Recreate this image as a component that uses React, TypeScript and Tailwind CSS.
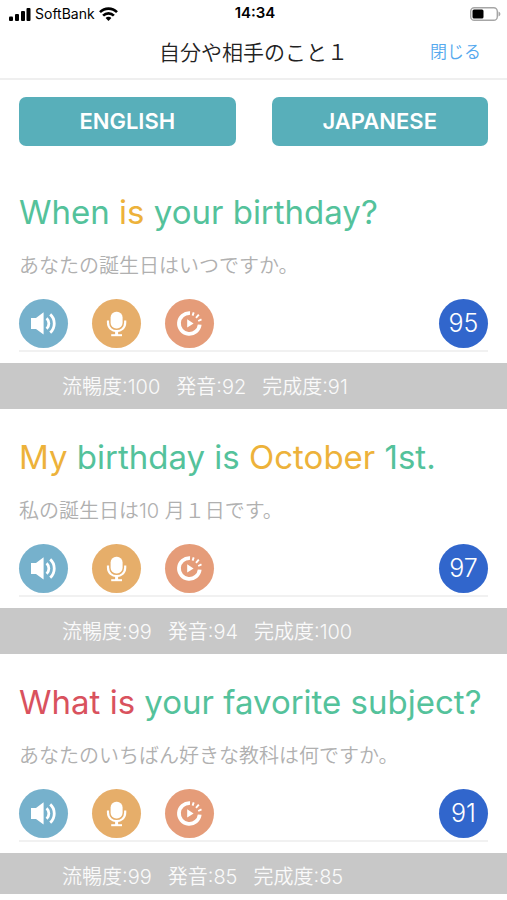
type Tone = 'good' | 'fair' | 'poor';

type Phrase = {
  id: number;
  words: { text: string; tone: Tone }[];
  translation: string;
  score: number;
  fluency: number;
  pronunciation: number;
  completeness: number;
};

const toneClass: Record<Tone, string> = {
  good: 'text-[#54c29b]',
  fair: 'text-[#edb23a]',
  poor: 'text-[#d9525e]',
};

const phrases: Phrase[] = [
  {
    id: 1,
    words: [
      { text: 'When', tone: 'good' },
      { text: 'is', tone: 'fair' },
      { text: 'your birthday?', tone: 'good' },
    ],
    translation: 'あなたの誕生日はいつですか。',
    score: 95,
    fluency: 100,
    pronunciation: 92,
    completeness: 91,
  },
  {
    id: 2,
    words: [
      { text: 'My', tone: 'fair' },
      { text: 'birthday is', tone: 'good' },
      { text: 'October', tone: 'fair' },
      { text: '1st.', tone: 'good' },
    ],
    translation: '私の誕生日は10 月１日です。',
    score: 97,
    fluency: 99,
    pronunciation: 94,
    completeness: 100,
  },
  {
    id: 3,
    words: [
      { text: 'What is', tone: 'poor' },
      { text: 'your favorite subject?', tone: 'good' },
    ],
    translation: 'あなたのいちばん好きな教科は何ですか。',
    score: 91,
    fluency: 99,
    pronunciation: 85,
    completeness: 85,
  },
];

function SignalIcon() {
  return (
    <svg width="22" height="14" viewBox="0 0 22 14" aria-hidden="true">
      <rect x="0" y="9.5" width="4" height="4.5" rx="1" />
      <rect x="6" y="7" width="4" height="7" rx="1" />
      <rect x="12" y="4" width="4" height="10" rx="1" />
      <rect x="17.5" y="1" width="4" height="13" rx="1" />
    </svg>
  );
}

function WifiIcon() {
  return (
    <svg width="19" height="14" viewBox="0 0 19 14" fill="none" stroke="black" strokeWidth="2.6" aria-hidden="true">
      <path d="M1 5.2C5.8 0.4 13.2 0.4 18 5.2" />
      <path d="M4.1 8.7C7.2 5.6 11.8 5.6 14.9 8.7" />
      <path d="M9.5 14L6.6 11C8.2 9.4 10.8 9.4 12.4 11Z" fill="black" stroke="none" />
    </svg>
  );
}

function BatteryIcon() {
  return (
    <svg width="31" height="14" viewBox="0 0 31 14" aria-hidden="true">
      <rect x="0.7" y="0.7" width="26.6" height="12.6" rx="3.6" fill="none" stroke="#a6a6a6" strokeWidth="1.4" />
      <rect x="2.5" y="2.5" width="11" height="9" rx="1.5" />
      <path d="M28.5 4.5C31 5.5 31 8.5 28.5 9.5Z" fill="#a6a6a6" />
    </svg>
  );
}

function SpeakerIcon() {
  return (
    <svg width="49" height="49" viewBox="0 0 49 49" fill="none" aria-hidden="true">
      <path d="M12 19H17L24.6 13.3V35.5L17 30H12Z" fill="white" />
      <path d="M27.6 19.2C30.6 22 30.6 27 27.6 29.8" stroke="white" strokeWidth="2.8" />
      <path d="M31.2 15.4C36.6 20 36.6 29 31.2 33.6" stroke="white" strokeWidth="2.8" />
    </svg>
  );
}

function MicIcon() {
  return (
    <svg width="49" height="49" viewBox="0 0 49 49" fill="none" aria-hidden="true">
      <rect x="18.6" y="12.8" width="12" height="16.6" rx="5.6" fill="white" />
      <path d="M16 21.5V23.5C16 35 33.2 35 33.2 23.5V21.5" stroke="white" strokeWidth="2.2" />
      <path d="M24.6 32V36" stroke="white" strokeWidth="3" />
      <path d="M19.2 36.2H30" stroke="white" strokeWidth="2" />
    </svg>
  );
}

function ReplayIcon() {
  return (
    <svg width="49" height="49" viewBox="0 0 49 49" fill="none" aria-hidden="true">
      <path d="M25 14.1A10.4 10.4 0 1 0 34.7 25.6" stroke="white" strokeWidth="3.8" />
      <path d="M22.2 20.2L28.6 24.4L22.2 28.6Z" fill="white" />
      <path d="M27.6 16.6L28.7 13.4M31 18.8L33.8 15.6M33.2 22L36.5 20.4" stroke="white" strokeWidth="1.9" />
    </svg>
  );
}

function PhraseCard({ phrase }: { phrase: Phrase }) {
  return (
    <li className="group pt-7">
      <div className="px-[19px]">
        <h2 className="text-[33px] leading-10">
          {phrase.words.map((w, i) => (
            <span key={w.text} className={toneClass[w.tone]}>
              {i > 0 && ' '}
              {w.text}
            </span>
          ))}
        </h2>
        <p className="mt-5 text-[20px] leading-7 font-[350] text-[#b0b0b0]">{phrase.translation}</p>
        <div className="mt-[19px] flex items-center gap-6 border-b-2 border-[#f1f1f1] pb-[2px]">
          <button aria-label="Listen" className="size-[49px] rounded-full bg-[#76b1cc]">
            <SpeakerIcon />
          </button>
          <button aria-label="Record" className="size-[49px] rounded-full bg-[#e6ae6a]">
            <MicIcon />
          </button>
          <button aria-label="Replay" className="size-[49px] rounded-full bg-[#e59c79]">
            <ReplayIcon />
          </button>
          <span className="ml-auto flex size-[49px] items-center justify-center rounded-full bg-[#3166cc] text-[25px] font-[350] text-white">
            {phrase.score}
          </span>
        </div>
      </div>
      <div className="mt-[11px] flex gap-4 bg-[#c8c8c8] pt-3 pb-[10px] pl-[62px] text-[20px] leading-6 font-[350] text-[#fafafa] group-last:pb-[5px]">
        <span>流暢度:{phrase.fluency}</span>
        <span>発音:{phrase.pronunciation}</span>
        <span>完成度:{phrase.completeness}</span>
      </div>
    </li>
  );
}

export default function App() {
  return (
    <div className="min-h-screen bg-white font-['Inter','Noto_Sans_CJK_JP',sans-serif]" lang="ja">
      <div className="grid h-[27px] grid-cols-3 items-center pr-[6px] pl-[9px] text-[14px] text-black">
        <div className="flex items-center gap-1">
          <SignalIcon />
          <span>SoftBank</span>
          <WifiIcon />
        </div>
        <span className="text-center text-[15px] font-semibold">14:34</span>
        <div className="flex justify-end">
          <BatteryIcon />
        </div>
      </div>

      <header className="grid h-[53px] grid-cols-[1fr_auto_1fr] items-center border-b-2 border-[#efefef] px-[26px]">
        <h1 className="col-start-2 text-[21px] font-[350] text-[#222]">自分や相手のこと１</h1>
        <button className="justify-self-end text-[17px] font-[350] text-[#55a9ee]">閉じる</button>
      </header>

      <main>
        <div className="grid grid-cols-2 gap-9 px-[19px] pt-[17px] pb-[18px]">
          <button className="h-[49px] rounded-[7px] bg-[#58afba] text-[22px] font-semibold text-white">ENGLISH</button>
          <button className="h-[49px] rounded-[7px] bg-[#58afba] text-[22px] font-semibold text-white">JAPANESE</button>
        </div>
        <ul>
          {phrases.map((p) => (
            <PhraseCard key={p.id} phrase={p} />
          ))}
        </ul>
      </main>
    </div>
  );
}
